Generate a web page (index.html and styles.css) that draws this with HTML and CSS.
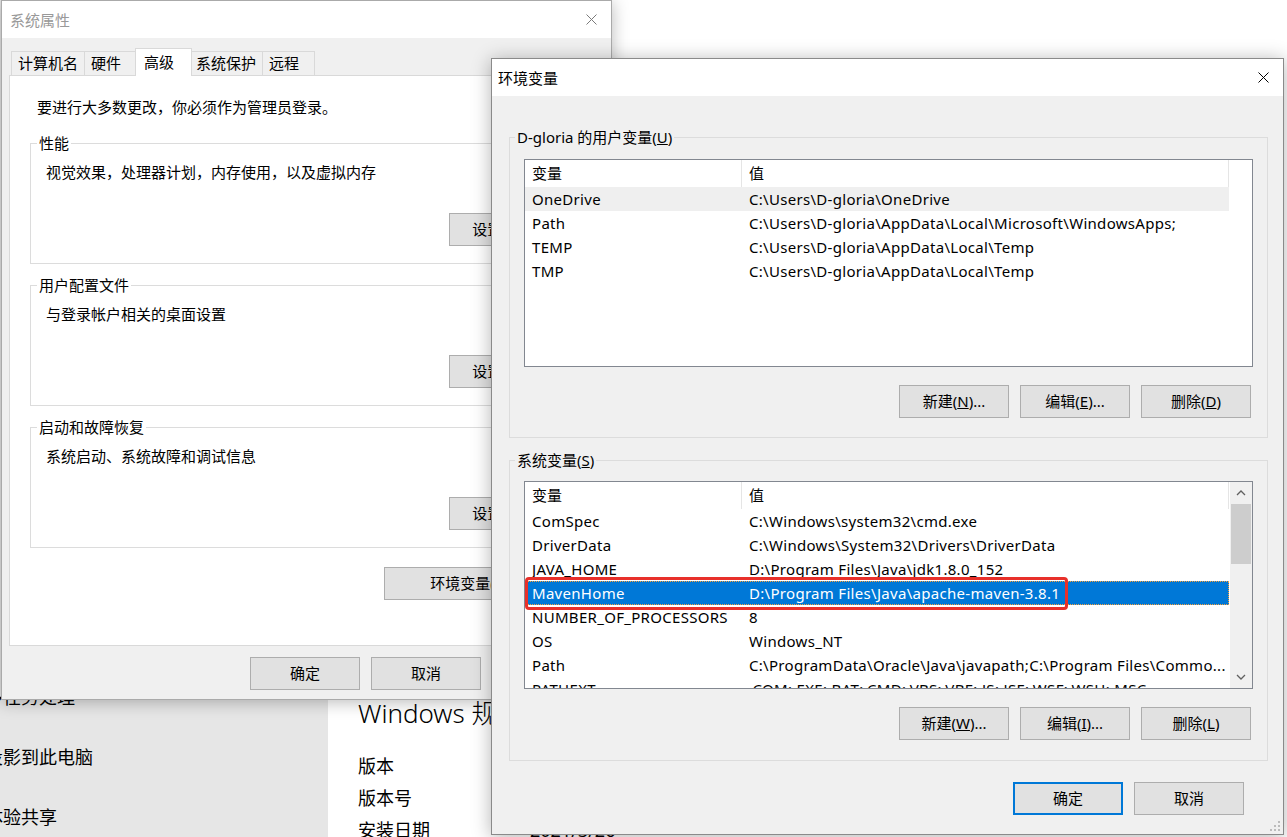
FILE: index.html
```html
<!DOCTYPE html>
<html lang="zh-CN">
<head>
<meta charset="utf-8">
<title>环境变量</title>
<link rel="stylesheet" href="styles.css">
</head>
<body>
<div class="desktop">
  <aside class="sidebar">
    <div class="nav-item">多任务处理</div>
    <div class="nav-item">投影到此电脑</div>
    <div class="nav-item">体验共享</div>
  </aside>
  <main class="settings">
    <h2 class="spec-title">Windows 规格</h2>
    <div class="spec-row"><span class="spec-label">版本</span><span>Windows 10 家庭中文版</span></div>
    <div class="spec-row"><span class="spec-label">版本号</span><span>20H2</span></div>
    <div class="spec-row"><span class="spec-label">安装日期</span><span>2021/3/26</span></div>
  </main>
</div>

<section class="win sysprop">
  <header class="titlebar inactive">
    <span class="title">系统属性</span>
    <span class="close"><svg width="11" height="11" viewBox="0 0 11 11"><path d="M0.5 0.5 L10.5 10.5 M10.5 0.5 L0.5 10.5" stroke="#7a7a7a" stroke-width="1" fill="none"/></svg></span>
  </header>
  <div class="sp-body">
    <div class="tabs">
      <div class="tab">计算机名</div>
      <div class="tab">硬件</div>
      <div class="tab active">高级</div>
      <div class="tab">系统保护</div>
      <div class="tab">远程</div>
    </div>
    <div class="tab-panel">
      <p class="note">要进行大多数更改，你必须作为管理员登录。</p>
      <fieldset class="group">
        <legend>性能</legend>
        <p class="desc">视觉效果，处理器计划，内存使用，以及虚拟内存</p>
        <div class="btn-row"><button class="btn set-btn">设置(<u>S</u>)...</button></div>
      </fieldset>
      <fieldset class="group">
        <legend>用户配置文件</legend>
        <p class="desc">与登录帐户相关的桌面设置</p>
        <div class="btn-row"><button class="btn set-btn">设置(<u>E</u>)...</button></div>
      </fieldset>
      <fieldset class="group">
        <legend>启动和故障恢复</legend>
        <p class="desc">系统启动、系统故障和调试信息</p>
        <div class="btn-row"><button class="btn set-btn">设置(<u>T</u>)...</button></div>
      </fieldset>
      <div class="btn-row env-row"><button class="btn env-btn">环境变量(<u>N</u>)...</button></div>
    </div>
    <div class="dialog-buttons">
      <button class="btn">确定</button>
      <button class="btn">取消</button>
      <button class="btn">应用(<u>A</u>)</button>
    </div>
  </div>
</section>

<section class="win envvars">
  <header class="titlebar">
    <span class="title">环境变量</span>
    <span class="close"><svg width="11" height="11" viewBox="0 0 11 11"><path d="M0.5 0.5 L10.5 10.5 M10.5 0.5 L0.5 10.5" stroke="#000" stroke-width="1" fill="none"/></svg></span>
  </header>
  <div class="ev-body">
    <fieldset class="group evgroup">
      <legend>D-gloria 的用户变量(<u>U</u>)</legend>
      <div class="listview">
        <div class="lv-body">
          <div class="lv-head"><span class="c1">变量</span><span class="c2">值</span></div>
          <div class="lv-row hover"><span class="c1">OneDrive</span><span class="c2">C:\Users\D-gloria\OneDrive</span></div>
          <div class="lv-row"><span class="c1">Path</span><span class="c2">C:\Users\D-gloria\AppData\Local\Microsoft\WindowsApps;</span></div>
          <div class="lv-row"><span class="c1">TEMP</span><span class="c2">C:\Users\D-gloria\AppData\Local\Temp</span></div>
          <div class="lv-row"><span class="c1">TMP</span><span class="c2">C:\Users\D-gloria\AppData\Local\Temp</span></div>
        </div>
      </div>
      <div class="btn-row ev-btns">
        <button class="btn">新建(<u>N</u>)...</button>
        <button class="btn">编辑(<u>E</u>)...</button>
        <button class="btn">删除(<u>D</u>)</button>
      </div>
    </fieldset>
    <fieldset class="group evgroup sys">
      <legend>系统变量(<u>S</u>)</legend>
      <div class="listview">
        <div class="lv-body">
          <div class="lv-head"><span class="c1">变量</span><span class="c2">值</span></div>
          <div class="lv-row"><span class="c1">ComSpec</span><span class="c2">C:\Windows\system32\cmd.exe</span></div>
          <div class="lv-row"><span class="c1">DriverData</span><span class="c2">C:\Windows\System32\Drivers\DriverData</span></div>
          <div class="lv-row"><span class="c1">JAVA_HOME</span><span class="c2">D:\Program Files\Java\jdk1.8.0_152</span></div>
          <div class="lv-row selected"><span class="c1">MavenHome</span><span class="c2">D:\Program Files\Java\apache-maven-3.8.1</span></div>
          <div class="lv-row"><span class="c1">NUMBER_OF_PROCESSORS</span><span class="c2">8</span></div>
          <div class="lv-row"><span class="c1">OS</span><span class="c2">Windows_NT</span></div>
          <div class="lv-row"><span class="c1">Path</span><span class="c2">C:\ProgramData\Oracle\Java\javapath;C:\Program Files\Commo...</span></div>
          <div class="lv-row"><span class="c1">PATHEXT</span><span class="c2">.COM;.EXE;.BAT;.CMD;.VBS;.VBE;.JS;.JSE;.WSF;.WSH;.MSC</span></div>
        </div>
        <div class="scrollbar">
          <div class="sb-arrow"><svg width="22" height="22" viewBox="0 0 22 22"><polyline points="7,13 11,9 15,13" fill="none" stroke="#606060" stroke-width="1.3"/></svg></div>
          <div class="sb-track"><div class="sb-thumb"></div></div>
          <div class="sb-arrow"><svg width="22" height="22" viewBox="0 0 22 22"><polyline points="7,9 11,13 15,9" fill="none" stroke="#606060" stroke-width="1.3"/></svg></div>
        </div>
      </div>
      <div class="btn-row ev-btns">
        <button class="btn">新建(<u>W</u>)...</button>
        <button class="btn">编辑(<u>I</u>)...</button>
        <button class="btn">删除(<u>L</u>)</button>
      </div>
    </fieldset>
    <div class="dialog-buttons ev-ok">
      <button class="btn default">确定</button>
      <button class="btn">取消</button>
    </div>
  </div>
  <svg class="grip" width="12" height="12" viewBox="0 0 12 12">
    <rect x="9" y="1" width="2" height="2" fill="#bcbcbc"/>
    <rect x="5" y="5" width="2" height="2" fill="#bcbcbc"/>
    <rect x="9" y="5" width="2" height="2" fill="#bcbcbc"/>
    <rect x="1" y="9" width="2" height="2" fill="#bcbcbc"/>
    <rect x="5" y="9" width="2" height="2" fill="#bcbcbc"/>
    <rect x="9" y="9" width="2" height="2" fill="#bcbcbc"/>
  </svg>
</section>

<div class="annotation"></div>
</body>
</html>
```
FILE: styles.css
```css
* { box-sizing: border-box; }

html, body {
  margin: 0;
  padding: 0;
}

body {
  width: 1287px;
  height: 837px;
  overflow: hidden;
  position: relative;
  background: #fff;
  color: #000;
  font-family: "Noto Sans", "Noto Sans CJK SC", sans-serif;
  font-size: 15px;
}

/* ---------- background settings page ---------- */
.desktop {
  display: flex;
  height: 837px;
}

.sidebar {
  width: 328px;
  flex: none;
  background: #e6e6e6;
  padding-top: 667px;
  overflow: hidden;
}

.nav-item {
  height: 60px;
  line-height: 60px;
  font-size: 18px;
  white-space: nowrap;
  margin-left: -15px;
}

.settings {
  flex: 1;
  padding: 695px 0 0 30px;
}

.spec-title {
  margin: 0 0 19px;
  font-size: 26px;
  font-weight: 300;
  line-height: 36px;
}

.spec-row {
  display: flex;
  height: 32px;
  line-height: 32px;
  font-size: 18px;
}

.spec-label { width: 172px; }

/* ---------- windows ---------- */
.win {
  position: absolute;
  background: #f0f0f0;
  display: flex;
  flex-direction: column;
}

.sysprop {
  left: 1px;
  top: 0;
  width: 611px;
  height: 700px;
  border: 1px solid #aaaaaa;
  box-shadow: 0 2px 16px rgba(0, 0, 0, 0.28);
}

.envvars {
  left: 491px;
  top: 58px;
  width: 793px;
  height: 777px;
  border: 1px solid #8a8a8a;
  box-shadow: 0 2px 18px rgba(0, 0, 0, 0.3);
}

.titlebar {
  height: 37px;
  flex: none;
  background: #fff;
  display: flex;
  align-items: center;
  padding-left: 8px;
}

.envvars .titlebar { padding-left: 6px; }

.titlebar .title { flex: 1; }
.titlebar.inactive .title { color: #999; }

.close {
  width: 40px;
  display: flex;
  justify-content: center;
  align-items: center;
}

.btn {
  height: 33px;
  width: 110px;
  padding: 0 0 2px;
  background: #e1e1e1;
  border: 1px solid #adadad;
  color: #000;
  font: inherit;
  white-space: nowrap;
}

.btn.default { border: 2px solid #0078d7; }

.btn-row {
  display: flex;
  justify-content: flex-end;
}

/* ---------- system properties ---------- */
.sp-body {
  display: flex;
  flex-direction: column;
  padding: 10px 5px 0 7px;
}

.tabs {
  display: flex;
  align-items: flex-end;
  height: 27px;
  padding-left: 3px;
}

.tab {
  height: 24px;
  min-width: 53px;
  line-height: 22px;
  padding: 0 6px;
  border: 1px solid #d9d9d9;
  border-bottom: none;
  margin-left: -1px;
  background: #f0f0f0;
  white-space: nowrap;
}

.tab.active {
  height: 28px;
  min-width: 57px;
  line-height: 26px;
  padding: 0 8px;
  margin: 0 -2px -1px -2px;
  background: #fff;
  position: relative;
  z-index: 1;
}

.tab-panel {
  height: 571px;
  background: #fff;
  border: 1px solid #d9d9d9;
  padding: 21px 20px 0 20px;
  display: flex;
  flex-direction: column;
}

.note {
  margin: 0 0 0 7px;
  line-height: 20px;
}

.group {
  margin: 11px 0 0;
  padding: 9px 15px 17px;
  border: 1px solid #dcdcdc;
  min-width: 0;
}

.tab-panel .note + .group { margin-top: 16px; }

.group legend {
  margin-left: -9px;
  padding: 0 2px;
  line-height: 20px;
}

.desc {
  margin: 0;
  line-height: 20px;
}

.group .btn-row { margin-top: 31px; }

.set-btn {
  width: 106px;
  margin-right: 14px;
}

.env-row {
  margin-top: 19px;
  margin-right: 16px;
}

.env-btn { width: 185px; }

.dialog-buttons {
  display: flex;
  justify-content: flex-end;
  gap: 11px;
  margin: 11px 4px 0 0;
}

/* ---------- environment variables ---------- */
.ev-body {
  display: flex;
  flex-direction: column;
  padding: 0 15px 0 17px;
}

.evgroup {
  margin-top: 12px;
  padding: 12px 14px 19px;
}

.evgroup:first-child { margin-top: 31px; }

.evgroup.sys { padding-top: 11px; padding-bottom: 20px; }

.evgroup .btn-row.ev-btns {
  margin-top: 18px;
  margin-right: 2px;
  gap: 11px;
}

.listview {
  height: 208px;
  background: #fff;
  border: 1px solid #828790;
  display: flex;
  overflow: hidden;
}

.lv-body {
  flex: 1;
  overflow: hidden;
}

.lv-head,
.lv-row {
  display: flex;
  width: 704px;
  white-space: nowrap;
}

.lv-head {
  height: 27px;
  line-height: 27px;
}

.lv-head .c1 { border-right: 1px solid #e5e5e5; }
.lv-head .c2 { border-right: 1px solid #e5e5e5; }

.lv-row {
  height: 24px;
  line-height: 24px;
  letter-spacing: 0.3px;
}

.c1 {
  width: 217px;
  padding-left: 7px;
  overflow: hidden;
  flex: none;
}

.c2 {
  width: 487px;
  padding-left: 7px;
  overflow: hidden;
  flex: none;
}

.lv-row.hover { background: #efefef; }

.lv-row.selected {
  background: #0078d7;
  color: #fff;
  outline: 1px dotted #f7a13b;
  outline-offset: -1px;
}

.scrollbar {
  width: 22px;
  flex: none;
  background: #f0f0f0;
  display: flex;
  flex-direction: column;
}

.sb-arrow {
  height: 22px;
  flex: none;
}

.sb-arrow svg { display: block; }

.sb-track {
  flex: 1;
  padding: 0 1px;
}

.sb-thumb {
  height: 60px;
  background: #cdcdcd;
}

.ev-ok {
  margin: 21px 24px 0 0;
}

.grip {
  position: absolute;
  right: 2px;
  bottom: 2px;
}

.annotation {
  position: absolute;
  left: 525px;
  top: 577px;
  width: 543px;
  height: 33px;
  border: 3px solid #e8302a;
  border-radius: 4px;
  pointer-events: none;
}
```
